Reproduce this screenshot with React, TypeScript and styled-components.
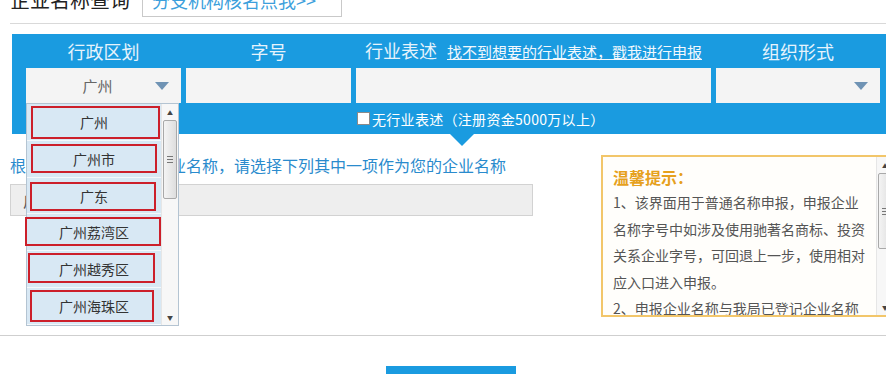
import styled, { createGlobalStyle } from 'styled-components';

const GlobalStyle = createGlobalStyle`
  html, body {
    margin: 0;
    padding: 0;
    overflow: hidden;
    background: #fff;
  }
  body {
    font-family: "Noto Sans CJK SC", "Microsoft YaHei", sans-serif;
  }
`;

type Mark = { top: number; left: number; right: number; bottom: number };

const regionOptions: { text: string; mark: Mark }[] = [
  { text: '广州', mark: { top: 2, left: 4, right: 1, bottom: 1 } },
  { text: '广州市', mark: { top: 3, left: 4, right: 4, bottom: 4 } },
  { text: '广东', mark: { top: 4, left: 3, right: 5, bottom: 2 } },
  { text: '广州荔湾区', mark: { top: 3, left: -2, right: 0, bottom: 4 } },
  { text: '广州越秀区', mark: { top: 2, left: 1, right: 6, bottom: 4 } },
  { text: '广州海珠区', mark: { top: 2, left: 3, right: 7, bottom: 2 } },
];

const tips = [
  '1、该界面用于普通名称申报，申报企业名称字号中如涉及使用驰著名商标、投资关系企业字号，可回退上一步，使用相对应入口进入申报。',
  '2、申报企业名称与我局已登记企业名称相同或近似的，将不予核准。',
];

export default function App() {
  return (
    <Page>
      <GlobalStyle />
      <HeaderRow>
        <PageTitle>企业名称查询</PageTitle>
        <BranchButton>分支机构核名点我&gt;&gt;</BranchButton>
      </HeaderRow>
      <Divider />

      <SearchPanel>
        <LabelRow>
          <Label $width={155}>行政区划</Label>
          <Label $width={165}>字号</Label>
          <Label $width={355}>
            行业表述<HelpLink>找不到想要的行业表述，戳我进行申报</HelpLink>
          </Label>
          <Label $width={164}>组织形式</Label>
        </LabelRow>
        <FieldRow>
          <SelectBox $width={155}>
            <SelectValue>广州</SelectValue>
            <Arrow />
            <Dropdown>
              <OptionList>
                {regionOptions.map((opt) => (
                  <OptionItem key={opt.text}>
                    {opt.text}
                    <RedMark
                      $top={opt.mark.top}
                      $left={opt.mark.left}
                      $right={opt.mark.right}
                      $bottom={opt.mark.bottom}
                    />
                  </OptionItem>
                ))}
              </OptionList>
              <ScrollBar>
                <ScrollArrow>▲</ScrollArrow>
                <Thumb $height={77}>
                  <Grip />
                </Thumb>
                <ScrollSpace />
                <ScrollArrow>▼</ScrollArrow>
              </ScrollBar>
            </Dropdown>
          </SelectBox>
          <TextField $width={165} />
          <TextField $width={355} />
          <SelectBox $width={164}>
            <SelectValue />
            <Arrow />
          </SelectBox>
        </FieldRow>
        <CheckRow>
          <CheckLabel>
            <CheckBox type="checkbox" />
            无行业表述（注册资金5000万以上）
          </CheckLabel>
        </CheckRow>
      </SearchPanel>

      <ResultRow>
        <ResultColumn>
          <ResultHint>根据规则已为您生成企业名称，请选择下列其中一项作为您的企业名称</ResultHint>
          <NameField>广州某某有限公司</NameField>
        </ResultColumn>
        <TipBox>
          <TipBody>
            <TipTitle>温馨提示：</TipTitle>
            {tips.map((t) => (
              <TipText key={t}>{t}</TipText>
            ))}
          </TipBody>
          <ScrollBar>
            <ScrollArrow>▲</ScrollArrow>
            <Thumb $height={74}>
              <Grip />
            </Thumb>
            <ScrollSpace />
            <ScrollArrow>▼</ScrollArrow>
          </ScrollBar>
        </TipBox>
      </ResultRow>

      <BottomLine />
      <ButtonRow>
        <NextButton>下一步</NextButton>
      </ButtonRow>
    </Page>
  );
}

const Page = styled.div`
  width: 886px;
  overflow: hidden;
`;

const HeaderRow = styled.div`
  display: flex;
  align-items: center;
  gap: 12px;
  height: 30px;
  margin-top: -13px;
  padding-left: 10px;
`;

const PageTitle = styled.h2`
  margin: -5px 0 0;
  font-size: 20px;
  font-weight: normal;
  line-height: 24px;
  color: #222;
`;

const BranchButton = styled.div`
  box-sizing: border-box;
  width: 200px;
  height: 30px;
  border: 1px solid #c9c9c9;
  color: #3c9fdc;
  font-size: 18px;
  line-height: 24px;
  padding-left: 9px;
`;

const Divider = styled.div`
  margin: 6px 0 0 10px;
  height: 1px;
  background: #d9d9d9;
`;

const SearchPanel = styled.div`
  position: relative;
  box-sizing: border-box;
  width: 882px;
  margin: 10px 0 0 12px;
  padding: 0 14px;
  height: 100px;
  background: #1a9be0;

  &::after {
    content: '';
    position: absolute;
    top: 100%;
    left: 438px;
    border-left: 12px solid transparent;
    border-right: 12px solid transparent;
    border-top: 12px solid #1a9be0;
  }
`;

const LabelRow = styled.div`
  display: flex;
  gap: 5px;
  height: 34px;
  align-items: center;
`;

const Label = styled.div<{ $width: number }>`
  width: ${(p) => p.$width}px;
  display: flex;
  justify-content: center;
  align-items: baseline;
  font-size: 18px;
  line-height: 24px;
  color: #e6f3fc;
`;

const HelpLink = styled.a`
  margin-left: 10px;
  font-size: 15px;
  color: #f2f8fd;
  text-decoration: underline;
  white-space: nowrap;
`;

const FieldRow = styled.div`
  display: flex;
  gap: 5px;
  height: 35px;
`;

const TextField = styled.div<{ $width: number }>`
  width: ${(p) => p.$width}px;
  background: #f4f4f4;
`;

const SelectBox = styled.div<{ $width: number }>`
  position: relative;
  width: ${(p) => p.$width}px;
  display: flex;
  align-items: center;
  background: #f4f4f4;
  padding-right: 12px;
  box-sizing: border-box;
`;

const SelectValue = styled.div`
  flex: 1;
  text-align: center;
  font-size: 15px;
  color: #666;
  padding-left: 14px;
`;

const Arrow = styled.span`
  width: 0;
  height: 0;
  border-left: 7px solid transparent;
  border-right: 7px solid transparent;
  border-top: 8px solid #6f93b4;
`;

const Dropdown = styled.div`
  position: absolute;
  top: 100%;
  left: 0;
  z-index: 5;
  display: flex;
  width: 153px;
  height: 223px;
  box-sizing: border-box;
  border: 1px solid #b4c4d2;
  background: #fff;
`;

const OptionList = styled.div`
  width: 135px;
  display: flex;
  flex-direction: column;
`;

const OptionItem = styled.div`
  position: relative;
  height: 36px;
  border-bottom: 1px solid #f4f8fb;
  background: #d8e8f4;
  display: flex;
  align-items: center;
  justify-content: center;
  font-size: 14px;
  color: #333;
`;

const RedMark = styled.span<{ $top: number; $left: number; $right: number; $bottom: number }>`
  position: absolute;
  top: ${(p) => p.$top}px;
  left: ${(p) => p.$left}px;
  right: ${(p) => p.$right}px;
  bottom: ${(p) => p.$bottom}px;
  border: 2px solid #cc1f2a;
`;

const ScrollBar = styled.div`
  width: 16px;
  flex-shrink: 0;
  display: flex;
  flex-direction: column;
  background: #f7f7f7;
  border-left: 1px solid #e6e6e6;
`;

const ScrollArrow = styled.div`
  height: 16px;
  display: flex;
  align-items: center;
  justify-content: center;
  font-size: 6px;
  color: #444;
`;

const Thumb = styled.div<{ $height: number }>`
  height: ${(p) => p.$height}px;
  margin: 0 1px;
  border: 1px solid #a9a9a9;
  border-radius: 2px;
  background: linear-gradient(to right, #f4f4f4, #dedede);
  display: flex;
  align-items: center;
  justify-content: center;
`;

const Grip = styled.span`
  width: 6px;
  height: 7px;
  background: repeating-linear-gradient(to bottom, #777 0 1px, transparent 1px 3px);
`;

const ScrollSpace = styled.div`
  flex: 1;
`;

const CheckRow = styled.div`
  height: 31px;
  display: flex;
  align-items: center;
  padding-left: 331px;
`;

const CheckLabel = styled.label`
  display: flex;
  align-items: center;
  gap: 2px;
  font-size: 14px;
  letter-spacing: 0.3px;
  color: #fff;
`;

const CheckBox = styled.input`
  appearance: none;
  margin: 0;
  width: 13px;
  height: 13px;
  background: #fff;
  border: 1px solid #8a8a8a;
  box-sizing: border-box;
`;

const ResultRow = styled.div`
  display: flex;
  align-items: flex-start;
  margin-top: 19px;
  padding-left: 10px;
`;

const ResultColumn = styled.div`
  width: 523px;
  flex-shrink: 0;
  display: flex;
  flex-direction: column;
`;

const ResultHint = styled.div`
  font-size: 16px;
  line-height: 24px;
  color: #2a8bcd;
  white-space: nowrap;
`;

const NameField = styled.div`
  margin-top: 7px;
  height: 32px;
  box-sizing: border-box;
  border: 1px solid #d2d2d2;
  background: #eeeeee;
  padding-left: 12px;
  font-size: 16px;
  line-height: 30px;
  color: #555;
`;

const TipBox = styled.div`
  margin: 2px 0 0 68px;
  width: 300px;
  height: 162px;
  box-sizing: border-box;
  border: 2px solid #f2c66a;
  background: #fffefb;
  display: flex;
  flex-shrink: 0;
  overflow: hidden;
`;

const TipBody = styled.div`
  width: 273px;
  padding: 8px 0 0 10px;
  box-sizing: border-box;
  overflow: hidden;
`;

const TipTitle = styled.div`
  font-size: 16px;
  font-weight: bold;
  line-height: 24px;
  color: #e6a11d;
`;

const TipText = styled.p`
  margin: 0;
  font-size: 14px;
  line-height: 26.5px;
  color: #555;
  width: 256px;
`;

const BottomLine = styled.div`
  margin-top: 18px;
  height: 1px;
  background: #cfcfcf;
`;

const ButtonRow = styled.div`
  display: flex;
  padding-left: 386px;
  margin-top: 30px;
`;

const NextButton = styled.button`
  width: 130px;
  height: 38px;
  border: none;
  background: #1a9be0;
  color: #fff;
  font-family: inherit;
  font-size: 16px;
`;
